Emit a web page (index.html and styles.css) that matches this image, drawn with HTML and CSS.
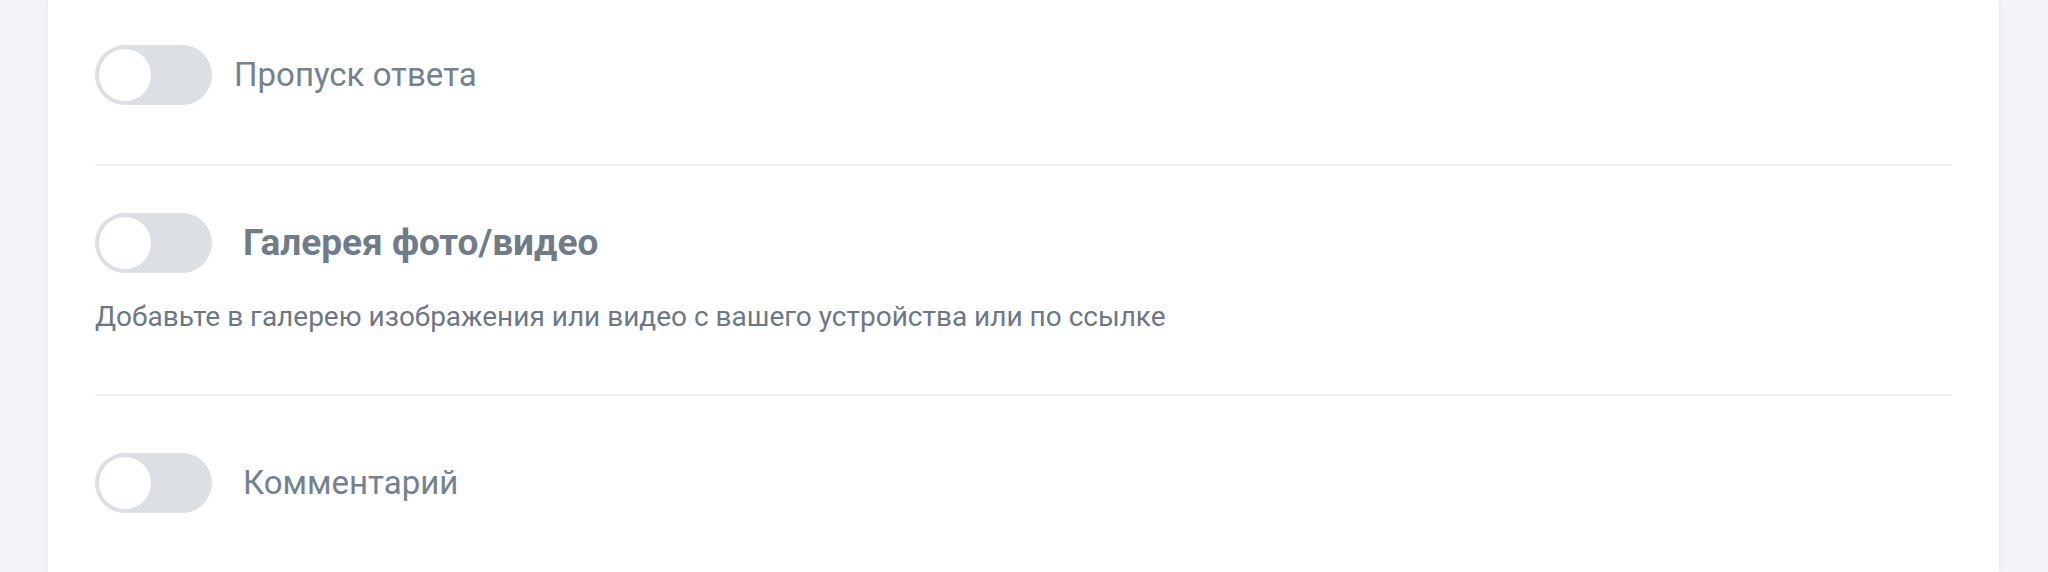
FILE: index.html
```html
<!DOCTYPE html>
<html lang="ru">
<head>
<meta charset="utf-8">
<title>Настройки вопроса</title>
<link rel="stylesheet" href="styles.css">
</head>
<body>
<div class="page">
  <div class="card">
    <section class="section section-first">
      <div class="row">
        <span class="toggle"><span class="knob"></span></span>
        <span class="label label-tight">Пропуск ответа</span>
      </div>
    </section>
    <div class="divider"></div>
    <section class="section section-second">
      <div class="row">
        <span class="toggle"><span class="knob"></span></span>
        <span class="label label-bold">Галерея фото/видео</span>
      </div>
      <p class="desc">Добавьте в галерею изображения или видео с вашего устройства или по ссылке</p>
    </section>
    <div class="divider"></div>
    <section class="section section-third">
      <div class="row">
        <span class="toggle"><span class="knob"></span></span>
        <span class="label">Комментарий</span>
      </div>
    </section>
  </div>
</div>
</body>
</html>
```
FILE: styles.css
```css
html, body {
  margin: 0;
  padding: 0;
  height: 100%;
}
body {
  background: #f4f5f9;
  font-family: Roboto, "Liberation Sans", Arial, sans-serif;
  overflow: hidden;
}
.page {
  padding-left: 48px;
  height: 100%;
}
.card {
  width: 1951px;
  min-height: 100%;
  background: #ffffff;
  box-shadow: 0 0 8px rgba(40, 50, 80, 0.08);
  padding: 0 47px;
  box-sizing: border-box;
}
.section-first {
  padding-top: 45px;
  padding-bottom: 59px;
}
.section-second {
  padding-top: 47px;
  padding-bottom: 59px;
}
.section-third {
  padding-top: 57px;
}
.row {
  display: flex;
  align-items: center;
  gap: 31px;
  height: 60px;
}
.toggle {
  flex: none;
  width: 117px;
  height: 60px;
  border-radius: 30px;
  background: #dcdfe4;
  display: flex;
  align-items: center;
  padding-left: 4px;
  box-sizing: border-box;
}
.knob {
  width: 52px;
  height: 52px;
  border-radius: 50%;
  background: #ffffff;
}
.label {
  font-size: 33px;
  color: #748290;
  line-height: 40px;
}
.label-tight {
  margin-left: -9px;
}
.label-bold {
  font-weight: 700;
  font-size: 37px;
  color: #6f7c8a;
}
.desc {
  margin: 26px 0 0;
  font-size: 28px;
  line-height: 36px;
  color: #6d7886;
}
.divider {
  height: 2px;
  background: #eceef1;
}
```
